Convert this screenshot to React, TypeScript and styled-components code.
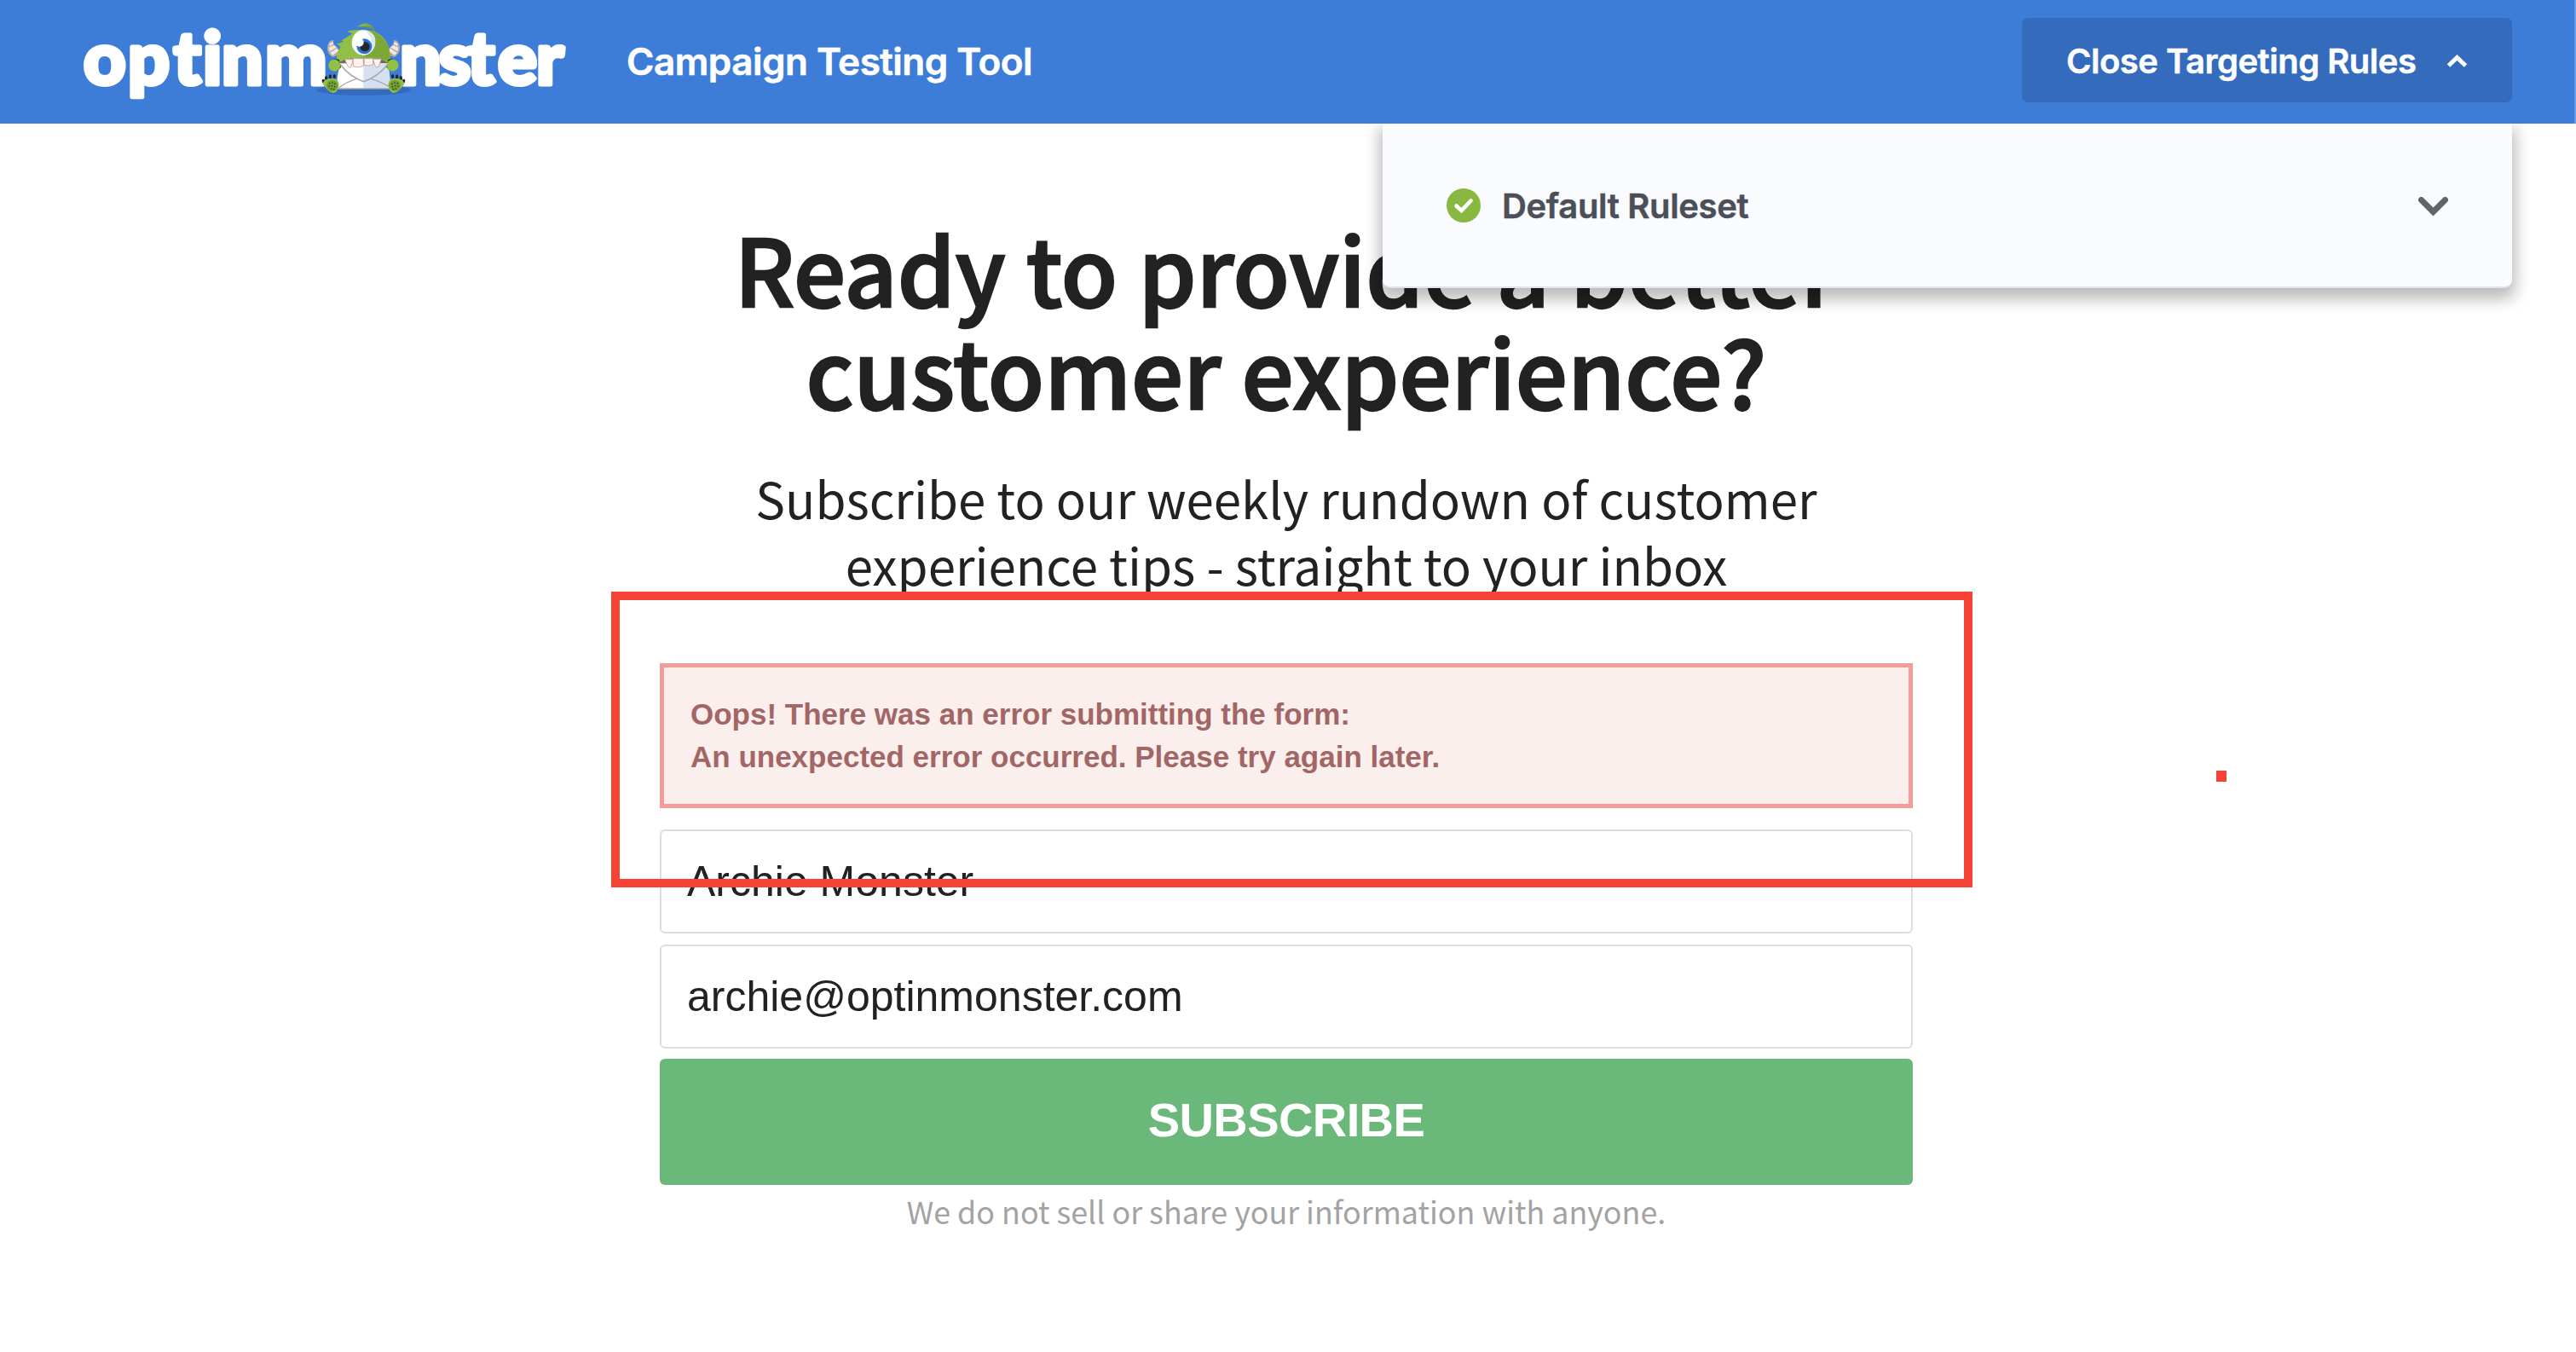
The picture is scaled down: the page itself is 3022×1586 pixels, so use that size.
import React from "react";
import styled, { createGlobalStyle } from "styled-components";

const GlobalStyle = createGlobalStyle`
  *, *::before, *::after { box-sizing: border-box; }
  body { margin: 0; background: #fff; overflow: hidden; }
`;

const ui = `Inter, "Liberation Sans", sans-serif`;
const humanist = `"Noto Sans CJK SC", "Noto Sans CJK JP", sans-serif`;
const grotesk = `"Liberation Sans", Arial, sans-serif`;

const Page = styled.div`
  position: relative;
  width: 3022px;
  height: 1586px;
  overflow: hidden;
  background: #fff;
`;

const Header = styled.header`
  position: relative;
  z-index: 2;
  display: flex;
  align-items: flex-start;
  height: 145px;
  padding: 0 73px 0 90px;
  background: #3d7dd8;
  border-right: 2px solid #6499e3;
`;

const Logo = styled.svg`
  flex: none;
  width: 600px;
  height: 145px;
`;

const ToolTitle = styled.h2`
  margin: 0 auto 0 45px;
  padding-top: 44px;
  font: 600 44px/56px ${ui};
  letter-spacing: -0.5px;
  -webkit-text-stroke: 0.6px #fff;
  color: #fff;
`;

const RulesButton = styled.button`
  display: flex;
  align-items: center;
  justify-content: space-between;
  width: 575px;
  height: 99px;
  margin-top: 21px;
  padding: 3px 52px 0 52px;
  border: 0;
  border-radius: 7px;
  background: #346bbd;
  color: #fff;
  font: 600 40px/50px ${ui};
  letter-spacing: -0.5px;
  -webkit-text-stroke: 0.5px #fff;
  white-space: nowrap;
`;

const RulesPanel = styled.section`
  position: absolute;
  z-index: 1;
  top: 145px;
  left: 1622px;
  display: flex;
  align-items: center;
  width: 1325px;
  height: 193px;
  padding: 0 75px;
  border-bottom: 2px solid #dde4ef;
  border-radius: 0 0 9px 9px;
  background: #fafbff;
  box-shadow: 0 9px 18px 4px rgba(0, 0, 0, 0.27);
`;

const RulesetName = styled.span`
  flex: 1;
  margin-left: 25px;
  padding-top: 2px;
  font: 600 40px/50px ${ui};
  letter-spacing: -0.35px;
  -webkit-text-stroke: 0.5px #4b4f58;
  color: #4b4f58;
`;

const Icon = styled.svg<{ $drop?: number }>`
  flex: none;
  display: block;
  margin-top: ${(p) => p.$drop ?? 0}px;
`;

const Campaign = styled.main`
  display: flex;
  flex-direction: column;
  width: 1470px;
  margin: 0 auto 0 774px;
  padding-top: 108px;
  text-align: center;
  color: #222;
`;

const Heading = styled.h1`
  margin: 0;
  font: 500 108px/120px ${humanist};
  -webkit-text-stroke: 2.4px #222;
  white-space: nowrap;
`;

const Lead = styled.p`
  margin: 52px 0 0;
  font: 400 58.25px/78px ${humanist};
  white-space: nowrap;
`;

const ErrorBox = styled.div`
  height: 170px;
  margin-top: 77px;
  padding: 30px 31px;
  border: 5px solid #f29c9c;
  background: #fbefed;
  color: #a36666;
  text-align: left;
  font: 700 35px/50px ${grotesk};
  white-space: nowrap;
`;

const Field = styled.input<{ $gap?: number }>`
  display: block;
  width: 100%;
  height: 122px;
  margin: ${(p) => p.$gap ?? 13}px 0 0;
  padding: 0 30px;
  border: 2px solid #ddd;
  border-radius: 6px;
  outline: 0;
  background: #fff;
  color: #222;
  font: 400 50px/60px ${grotesk};
`;

const Submit = styled.button`
  height: 148px;
  margin-top: 12px;
  padding: 0 0 5px;
  border: 0;
  border-radius: 6px;
  background: #6ab87a;
  color: #fff;
  font: 700 56px/64px ${grotesk};
  letter-spacing: -0.6px;
`;

const Privacy = styled.p`
  margin: 4px 0 0;
  font: 400 35.85px/52px ${humanist};
  color: #a3a3a3;
`;

const HighlightBox = styled.div`
  position: absolute;
  z-index: 3;
  top: 693.5px;
  left: 717px;
  width: 1597px;
  height: 347px;
  border: 10px solid #f54336;
`;

const HighlightDot = styled.div`
  position: absolute;
  z-index: 3;
  top: 904px;
  left: 2600px;
  width: 12px;
  height: 13px;
  background: #f54336;
`;

const Horn = () => (
  <>
    <path d="M92 156 C74 148 68 128 74 112 C78 100 84 95 94 97 C91 106 94 112 103 118 C112 125 117 136 112 148 Z" fill="#b5aaa7" />
    <path d="M80 108 L92 102 L93 110 L80 118 Z M77 122 L96 114 L104 122 L80 136 Z M82 140 L106 125 L112 134 L90 150 Z" fill="#f1e8e4" />
  </>
);

const solePads = [[80, 248], [90, 246], [99, 250], [78, 258], [88, 257], [98, 260], [86, 267], [95, 269]];

const Paw = () => (
  <>
    <g fill="#26262a">
      <ellipse cx="58" cy="240" rx="5" ry="7" />
      <ellipse cx="68" cy="230" rx="5" ry="8" />
      <ellipse cx="82" cy="225" rx="5" ry="8" />
      <ellipse cx="97" cy="224" rx="5" ry="7" />
    </g>
    <path d="M55 249 Q64 230 88 232 Q112 230 113 254 Q108 282 92 282 Q76 280 55 249 Z" fill="#90c146" />
    <ellipse cx="89" cy="256" rx="20" ry="20" fill="#759f35" />
    {solePads.map(([x, y]) => (
      <circle key={`${x}-${y}`} cx={x} cy={y} r="2.6" fill="#33431f" />
    ))}
  </>
);

const Monster = () => (
  <g transform="translate(270 15) scale(0.33333)">
    <ellipse cx="200" cy="272" rx="166" ry="19" fill="#346bbd" />
    <Horn />
    <g transform="translate(399 0) scale(-1 1)">
      <Horn />
    </g>
    <path d="M178 50 C192 34 226 28 240 66 C226 50 206 46 178 50 Z" fill="#84b63a" />
    <path d="M206 47 C222 42 234 50 240 66 C228 54 220 50 206 47 Z" fill="#6d9430" />
    <path d="M104 172 C104 150 108 134 119 121 C114 116 110 112 104 109 C116 107 122 104 130 99 C127 99 124 98 120 97 C134 91 146 82 160 74 C154 70 148 68 141 65 C166 59 226 56 251 73 C282 92 296 126 293 174 C260 186 140 186 104 172 Z" fill="#90c146" />
    <path d="M228 65 C272 78 298 120 293 174 C262 160 232 158 196 156 C234 142 252 104 228 65 Z" fill="#7da838" />
    <path d="M106 180 L134 164 Q200 152 266 166 L292 180 L290 200 L110 200 Z" fill="#6d655f" />
    <path d="M116 178 L286 178 L296 266 L104 268 C104 240 110 210 116 178 Z" fill="#fff" />
    <path d="M199 176 L286 178 L296 266 L199 268 Z" fill="#d5e0f2" />
    <path d="M118 182 Q152 226 200 242 Q248 226 284 182" fill="none" stroke="#a7a9ab" strokeWidth="5" />
    <path d="M112 264 Q138 244 174 233 M292 262 Q262 243 226 233" fill="none" stroke="#a7a9ab" strokeWidth="4" />
    <path d="M106 267 H294" stroke="#aaa49e" strokeWidth="5" />
    <path d="M134 164 H164 L155 191 Q148 196 144 188 Z M162 161 H199 V187 Q181 195 163 189 Z M201 161 H233 V182 Q218 189 202 184 Z M232 163 H262 L252 190 Q244 196 240 186 Z" fill="#fdf3ef" stroke="#c9aaa5" strokeWidth="3" />
    <ellipse cx="199" cy="105" rx="41" ry="44" fill="#fff" />
    <path d="M208 63 Q248 72 240 112 Q232 148 196 149 Q232 128 226 92 Z" fill="#dce7f4" />
    <circle cx="202" cy="118" r="27" fill="#2f6fd0" />
    <circle cx="204" cy="119" r="17" fill="#25272a" />
    <circle cx="185" cy="104" r="15" fill="#fff" />
    <path d="M96 164 Q106 160 114 166 L120 192 L108 204 Z M304 164 Q294 160 286 166 L280 192 L292 204 Z" fill="#26301f" />
    <ellipse cx="97" cy="185" rx="21" ry="21" fill="#90c146" />
    <ellipse cx="302" cy="185" rx="21" ry="21" fill="#90c146" />
    <Paw />
    <g transform="translate(399 0) scale(-1 1)">
      <Paw />
    </g>
  </g>
);

const Brand = () => (
  <Logo viewBox="0 0 600 145" aria-label="optinmonster">
    <g fill="#fff" stroke="#fff" strokeWidth="5" strokeLinejoin="round" fontFamily="Lato, sans-serif" fontWeight="900" fontSize="86">
      <text x="8 60 113.5 148 170 221" y="98.5">optinm</text>
      <text x="379 424.5 458 494 539" y="98.5">nster</text>
    </g>
    <Monster />
  </Logo>
);

export default function App() {
  return (
    <Page>
      <GlobalStyle />
      <Header>
        <Brand />
        <ToolTitle>Campaign Testing Tool</ToolTitle>
        <RulesButton>
          Close Targeting Rules
          <Icon width="25" height="16" viewBox="0 0 25 16">
            <path d="M2.5 13 L12.5 3.5 L22.5 13" fill="none" stroke="#fff" strokeWidth="5" />
          </Icon>
        </RulesButton>
      </Header>

      <RulesPanel>
        <Icon width="40" height="40" viewBox="0 0 40 40">
          <circle cx="20" cy="20" r="20" fill="#88b840" />
          <path d="M11.5 20.5 L17.5 26 L28.5 14.5" fill="none" stroke="#fff" strokeWidth="4.6" strokeLinecap="round" />
        </Icon>
        <RulesetName>Default Ruleset</RulesetName>
        <Icon $drop={3} width="35" height="23" viewBox="0 0 35 23">
          <path d="M3.5 3.5 L17.5 17.5 L31.5 3.5" fill="none" stroke="#626466" strokeWidth="7" strokeLinecap="round" />
        </Icon>
      </RulesPanel>

      <Campaign>
        <Heading>
          Ready to provide a better
          <br />
          customer experience?
        </Heading>
        <Lead>
          Subscribe to our weekly rundown of customer
          <br />
          experience tips - straight to your inbox
        </Lead>
        <ErrorBox>
          Oops! There was an error submitting the form:
          <br />
          An unexpected error occurred. Please try again later.
        </ErrorBox>
        <Field $gap={25} defaultValue="Archie Monster" />
        <Field defaultValue="archie@optinmonster.com" />
        <Submit>SUBSCRIBE</Submit>
        <Privacy>We do not sell or share your information with anyone.</Privacy>
      </Campaign>

      <HighlightBox />
      <HighlightDot />
    </Page>
  );
}
